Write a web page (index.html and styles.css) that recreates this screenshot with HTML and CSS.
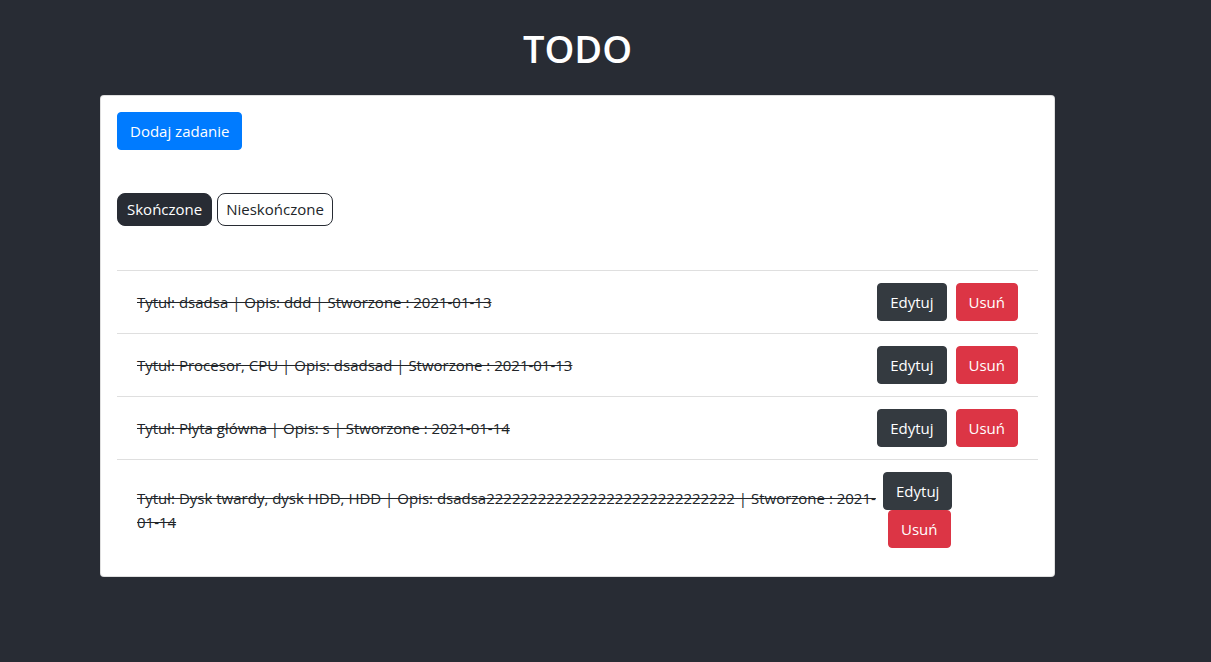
FILE: index.html
```html
<!DOCTYPE html>
<html lang="pl">
<head>
<meta charset="utf-8">
<title>TODO</title>
<link rel="stylesheet" href="styles.css">
</head>
<body>
<div class="app">
  <h1 class="title">TODO</h1>
  <div class="card">
    <div class="card-body">
      <div class="add-row">
        <button class="btn btn-primary">Dodaj zadanie</button>
      </div>
      <div class="filters">
        <button class="filter filter-active">Skończone</button>
        <button class="filter">Nieskończone</button>
      </div>
      <ul class="list">
        <li class="item">
          <span class="item-text">Tytuł: dsadsa | Opis: ddd | Stworzone : 2021-01-13</span>
          <div class="actions"><button class="btn btn-dark">Edytuj</button> <button class="btn btn-danger">Usuń</button></div>
        </li>
        <li class="item">
          <span class="item-text">Tytuł: Procesor, CPU | Opis: dsadsad | Stworzone : 2021-01-13</span>
          <div class="actions"><button class="btn btn-dark">Edytuj</button> <button class="btn btn-danger">Usuń</button></div>
        </li>
        <li class="item">
          <span class="item-text">Tytuł: Płyta główna | Opis: s | Stworzone : 2021-01-14</span>
          <div class="actions"><button class="btn btn-dark">Edytuj</button> <button class="btn btn-danger">Usuń</button></div>
        </li>
        <li class="item">
          <span class="item-text">Tytuł: Dysk twardy, dysk HDD, HDD | Opis: dsadsa22222222222222222222222222222 | Stworzone : 2021-01-14</span>
          <div class="actions"><button class="btn btn-dark">Edytuj</button> <button class="btn btn-danger">Usuń</button></div>
        </li>
      </ul>
    </div>
  </div>
</div>
</body>
</html>
```

FILE: styles.css
```css
html, body {
  margin: 0;
  padding: 0;
  background: #282c34;
  font-family: "Open Sans", "Noto Sans", sans-serif;
  font-size: 15px;
  line-height: 24px;
  color: #212529;
}

.app {
  width: 955px;
  margin-left: 100px;
  padding-bottom: 85px;
}

.title {
  margin: 24px 0 23px;
  text-align: center;
  color: #ffffff;
  font-size: 38px;
  line-height: 48px;
  font-weight: 600;
}

.card {
  background: #ffffff;
  border: 1px solid rgba(0, 0, 0, 0.125);
  border-radius: 4px;
}

.card-body {
  padding: 16px;
}

.btn {
  display: inline-block;
  font-family: inherit;
  font-size: 15px;
  line-height: 24px;
  padding: 6px 12px;
  border: 1px solid transparent;
  border-radius: 4px;
  color: #ffffff;
  cursor: pointer;
  vertical-align: middle;
}

.btn-primary {
  background: #007bff;
  border-color: #007bff;
}

.btn-dark {
  background: #343a40;
  border-color: #343a40;
}

.btn-danger {
  background: #dc3545;
  border-color: #dc3545;
}

.filters {
  margin-top: 43px;
  display: flex;
  gap: 5px;
}

.filter {
  font-family: inherit;
  font-size: 15px;
  line-height: 23px;
  padding: 4px 8px;
  border: 1px solid #282c34;
  border-radius: 8px;
  background: #ffffff;
  color: #212529;
}

.filter-active {
  padding: 4px 9px;
  background: #282c34;
  color: #ffffff;
}

.list {
  list-style: none;
  margin: 44px 0 0;
  padding: 0;
}

.item {
  display: flex;
  justify-content: space-between;
  align-items: center;
  padding: 12px 20px;
  border-top: 1px solid rgba(0, 0, 0, 0.125);
}

.item-text {
  text-decoration: line-through;
}

.actions .btn + .btn {
  margin-left: 5px;
}
```
